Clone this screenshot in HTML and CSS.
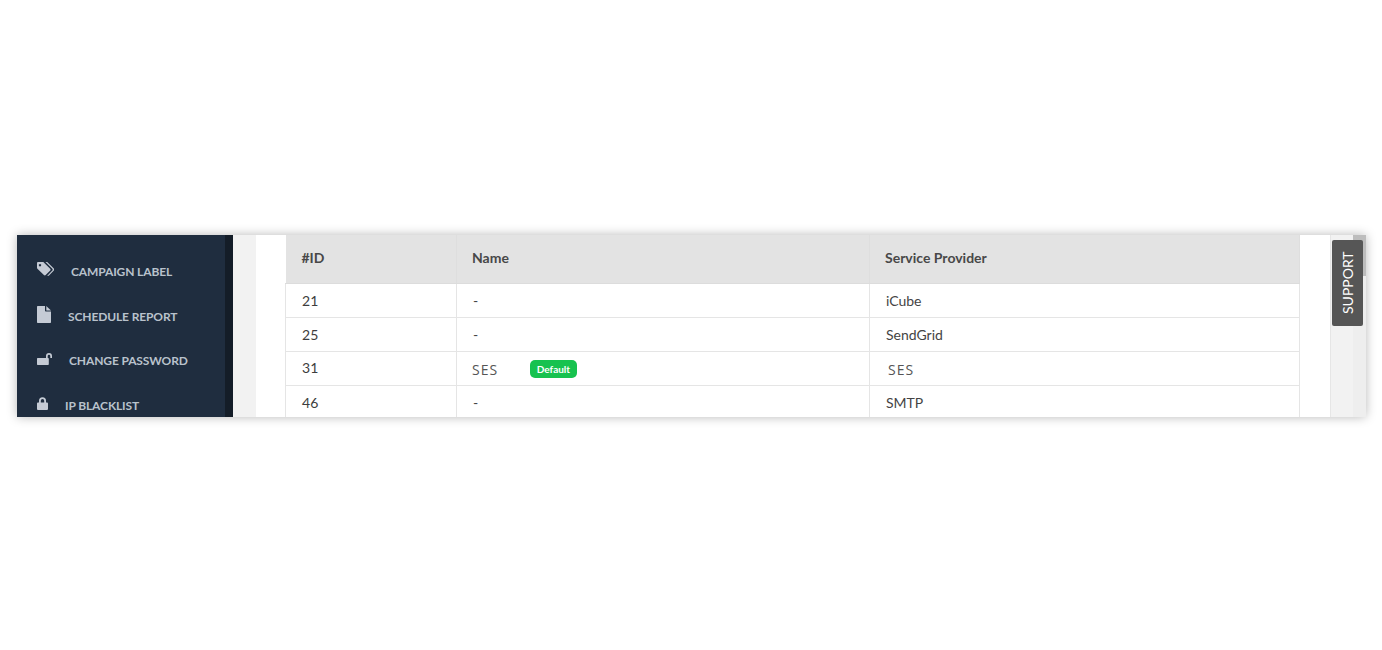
FILE: index.html
```html
<!DOCTYPE html>
<html lang="en">
<head>
<meta charset="utf-8">
<title>Service Providers</title>
<link rel="stylesheet" href="styles.css">
</head>
<body>
<div class="frame">
  <nav class="sidebar">
    <a class="nav-item">
      <svg class="icon" width="17" height="15" viewBox="0 0 17 15"><path d="M0 1.2C0 .5.5 0 1.2 0h4.600c.4 0 .8.2 1 .4l6.400 6.400c.5.5.5 1.300 0 1.800l-4.500 4.500c-.5.5-1.300.5-1.800 0L.4 6.700C.2 6.500 0 6.100 0 5.700z M3 2a1.200 1.200 0 1 0 .01 0z" fill-rule="evenodd"/><path d="M8.500 0h1.200c.4 0 .8.2 1 .4l5.900 5.900c.7.7.7 1.800 0 2.500l-4.600 4.700c-.5.5-1.100.6-1.700.3l5-5.200c.5-.5.5-1.300 0-1.800z"/></svg>
      <span>CAMPAIGN LABEL</span>
    </a>
    <a class="nav-item">
      <svg class="icon" width="14" height="17" viewBox="0 0 14 17"><path d="M0 .7C0 .3.3 0 .7 0H8v4.500c0 .6.5 1 1 1h5v10.800c0 .4-.3.7-.7.7H.7c-.4 0-.7-.3-.7-.7z"/><path d="M9.300 0 14 4.400H9.300z"/></svg>
      <span>SCHEDULE REPORT</span>
    </a>
    <a class="nav-item">
      <svg class="icon" width="15" height="13" viewBox="0 0 15 13"><path d="M.6 6H9V4a3 3 0 0 1 6 0v2h-1.700V4a1.300 1.300 0 0 0-2.600 0v2h.3c.5 0 .8.3.8.8v5.400c0 .5-.3.8-.8.8H.6c-.3 0-.6-.3-.6-.8V6.800C0 6.300.3 6 .6 6z"/></svg>
      <span>CHANGE PASSWORD</span>
    </a>
    <a class="nav-item">
      <svg class="icon" width="11" height="13" viewBox="0 0 11 13"><path d="M2 5.500V3.800a3.500 3.500 0 0 1 7 0v1.700h1.100c.5 0 .9.400.9.900v5.700c0 .5-.4.900-.9.900H.9c-.5 0-.9-.4-.9-.9V6.400c0-.5.400-.9.900-.9zm1.800 0h3.400V3.800a1.700 1.700 0 0 0-3.400 0z"/></svg>
      <span>IP BLACKLIST</span>
    </a>
  </nav>
  <main class="content">
    <div class="card">
      <table class="providers">
        <thead>
          <tr><th class="col-id">#ID</th><th class="col-name">Name</th><th>Service Provider</th></tr>
        </thead>
        <tbody>
          <tr><td class="num">21</td><td class="dash">-</td><td>iCube</td></tr>
          <tr><td class="num">25</td><td class="dash">-</td><td>SendGrid</td></tr>
          <tr><td class="num raised">31</td><td class="named">SES <span class="badge">Default</span></td><td class="indent">SES</td></tr>
          <tr><td class="num">46</td><td class="dash">-</td><td>SMTP</td></tr>
        </tbody>
      </table>
    </div>
    <div class="track"></div>
  </main>
  <div class="thumb"></div>
  <a class="support">SUPPORT</a>
</div>
</body>
</html>
```
FILE: styles.css
```css
html, body { margin: 0; padding: 0; background: #fff; }
body { height: 650px; overflow: hidden; font-family: Lato, "Open Sans", sans-serif; padding-top: 235px; box-sizing: border-box; }
.frame {
  position: relative;
  display: flex;
  width: 1349px;
  height: 182px;
  margin-left: 17px;
  overflow: hidden;
  background: #f0f0f0;
  box-shadow: 0 0 10px rgba(0,0,0,.28);
}
.sidebar {
  flex: 0 0 auto;
  box-sizing: border-box;
  width: 216px;
  padding: 14.500px 0 0 20px;
  background: #1f2d3f;
  border-right: 8px solid #141d28;
}
.nav-item {
  display: flex;
  align-items: center;
  gap: 17px;
  height: 44.500px;
  color: #b9c2cc;
  font-size: 12px;
  font-weight: 700;
  letter-spacing: -.12px;
}
.icon { flex: 0 0 auto; fill: #c5cbd5; margin-top: -4px; }
.content {
  flex: 1;
  display: flex;
  justify-content: space-between;
  box-sizing: border-box;
  padding-left: 23px;
  background: #f2f2f2;
}
.card {
  box-sizing: border-box;
  width: 1075px;
  height: 182px;
  padding: 0 30px 0 29px;
  background: #fff;
  border-right: 1px solid #e6e6e6;
}
.track {
  width: 13px;
  background: #eeeeee;
}
.providers {
  width: 1015px;
  table-layout: fixed;
  border-collapse: collapse;
  color: #444;
  font-size: 14px;
}
.providers th {
  height: 48px;
  padding: 0 15px 2px;
  background: #e3e3e3;
  border-bottom: 1px solid #dcdcdc;
  border-right: 1px solid #dedede;
  text-align: left;
  font-weight: 700;
  font-size: 14px;
  color: #484848;
  box-sizing: border-box;
}
.providers .col-id { width: 171px; padding-left: 16px; }
.providers .col-name { width: 413px; }
.providers td {
  height: 34px;
  padding: 0 15px 0 16px;
  border: 1px solid #e5e5e5;
  border-top: 0;
  box-sizing: border-box;
}
.num { color: #3d3d3d; letter-spacing: .1px; }
.providers td.raised { padding-bottom: 2px; }
.providers td.named { padding-left: 15px; padding-top: 2px; color: #555; font-family: "Open Sans", sans-serif; font-size: 14px; letter-spacing: 1px; }
.providers td.dash { padding-left: 16px; }
.providers td.indent { padding-left: 18px; padding-top: 2px; color: #555; font-family: "Open Sans", sans-serif; font-size: 14px; letter-spacing: 1px; }
.badge {
  display: inline-block;
  margin-left: 27px;
  padding: 0 7px;
  height: 18px;
  line-height: 18px;
  border-radius: 5px;
  background: #17c24f;
  color: #fff;
  font-family: Lato, sans-serif;
  font-size: 10px;
  font-weight: 700;
  letter-spacing: 0;
  vertical-align: 2px;
}
.thumb {
  position: absolute;
  top: 0;
  right: 0;
  width: 13px;
  height: 41px;
  background: #bdbdbd;
}
.support {
  position: absolute;
  top: 5px;
  left: 1315px;
  box-sizing: border-box;
  width: 31px;
  height: 86px;
  display: flex;
  align-items: center;
  justify-content: center;
  writing-mode: vertical-rl;
  transform: rotate(180deg);
  background: #565656;
  border-radius: 2px;
  color: #fff;
  font-size: 14px;
}
```
